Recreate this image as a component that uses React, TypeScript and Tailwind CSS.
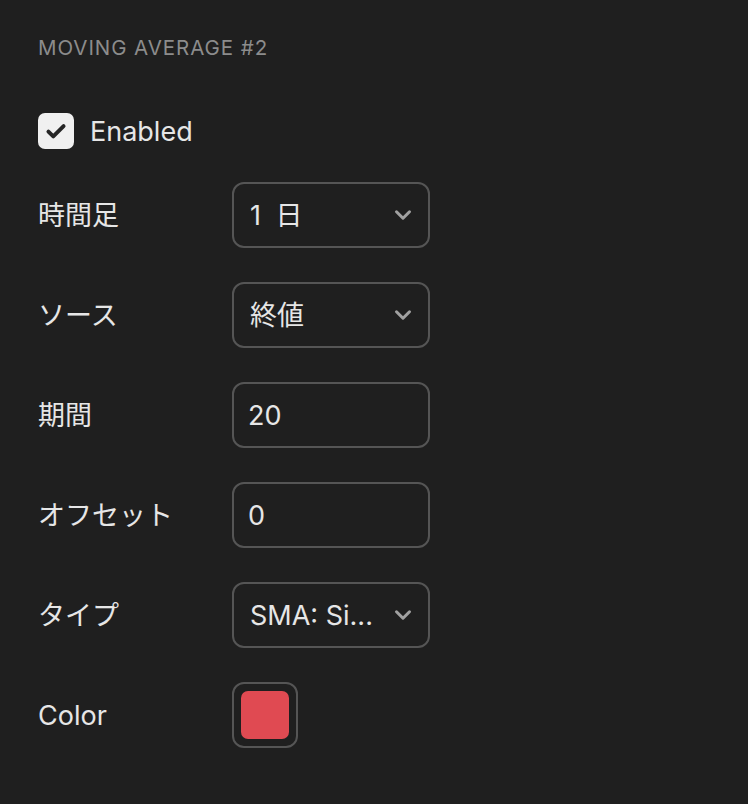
import { ChevronDown } from "lucide-react";

const font = { fontFamily: 'Inter, "Noto Sans CJK JP", sans-serif' };

function SelectBox({ value, wide }: { value: string; wide?: boolean }) {
  return (
    <div className="flex h-[66px] w-[198px] items-center justify-between rounded-[12px] border-2 border-[#555555] pl-[16px] pr-[12px]">
      <span className={wide ? "text-[27px] leading-none text-[#e6e6e6] [word-spacing:7px]" : "text-[27px] leading-none text-[#e6e6e6]"}>
        {value}
      </span>
      <ChevronDown className="h-[26px] w-[26px] text-[#a0a0a0]" strokeWidth={2.8} />
    </div>
  );
}

function InputBox({ value }: { value: string }) {
  return (
    <div className="flex h-[66px] w-[198px] items-center rounded-[12px] border-2 border-[#555555] pl-[14px]">
      <span className="text-[27px] leading-none text-[#e6e6e6]">{value}</span>
    </div>
  );
}

function Row({ label, children }: { label: string; children: React.ReactNode }) {
  return (
    <div className="flex items-center">
      <div className="w-[194px] text-[27px] leading-none text-[#e6e6e6]">{label}</div>
      {children}
    </div>
  );
}

export default function App() {
  return (
    <div className="min-h-[804px] w-[748px] bg-[#1f1f1f] px-[38px] pt-[36px]" style={font}>
      <h2 className="text-[20.5px] leading-[24px] uppercase tracking-[0.045em] text-[#8c8c8c]">Moving Average #2</h2>

      <div className="mt-[53px] flex items-center gap-[16px]">
        <div className="flex h-[36px] w-[36px] items-center justify-center rounded-[7px] bg-[#f0f0f0]">
          <svg viewBox="0 0 24 24" className="h-[26px] w-[26px]" fill="none" stroke="#262626" strokeWidth={3.6} strokeLinecap="round" strokeLinejoin="round">
            <path d="M5 12.5l4.5 4.5L19 7.5" />
          </svg>
        </div>
        <span className="text-[27px] leading-none text-[#e6e6e6]">Enabled</span>
      </div>

      <div className="mt-[33px] flex flex-col gap-[34px]">
        <Row label="時間足">
          <SelectBox value="1 日" wide />
        </Row>
        <Row label="ソース">
          <SelectBox value="終値" />
        </Row>
        <Row label="期間">
          <InputBox value="20" />
        </Row>
        <Row label="オフセット">
          <InputBox value="0" />
        </Row>
        <Row label="タイプ">
          <SelectBox value="SMA: Si..." />
        </Row>
        <Row label="Color">
          <div className="flex h-[66px] w-[66px] items-center justify-center rounded-[12px] border-2 border-[#555555]">
            <div className="h-[48px] w-[48px] rounded-[7px] bg-[#e04a52]" />
          </div>
        </Row>
      </div>
    </div>
  );
}
